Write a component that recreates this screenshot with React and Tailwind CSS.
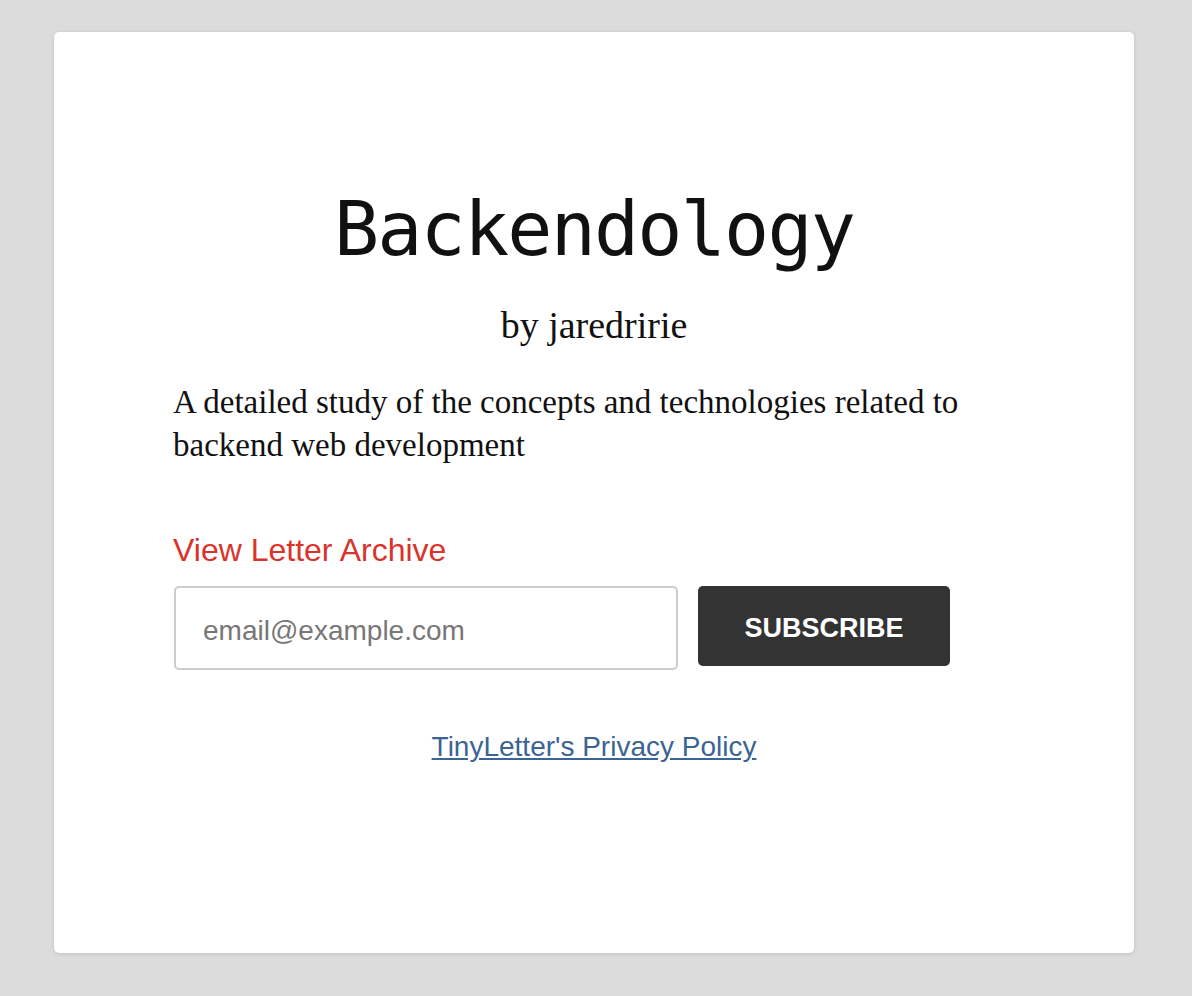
export default function App() {
	return (
		<div className="min-h-screen bg-[#dcdcdc] pt-[32px] pb-[43px] pl-[54px]">
			<div className="w-[1080px] bg-white rounded-[5px] shadow-[0_1px_4px_rgba(0,0,0,0.12)] h-[921px] flex flex-col items-center pt-[153px]">
				<h1 className="text-[75px] leading-[88px] tracking-[-1.8px] text-[#111] font-['DejaVu_Sans_Mono',monospace]">Backendology</h1>
				<p className="mt-[30px] text-[38px] leading-[44px] text-[#111] font-['Liberation_Serif',serif]">by jaredririe</p>
				<div className="w-[842px] mt-[34px]">
					<p className="text-[33px] leading-[43px] text-[#111] font-['Liberation_Serif',serif]">
						A detailed study of the concepts and technologies related to backend web development
					</p>
					<a href="#" className="block mt-[65px] text-[32px] leading-[36px] text-[#d9342b] font-['Liberation_Sans',sans-serif]">
						View Letter Archive
					</a>
					<form className="flex items-start gap-[20px] mt-[18px] ml-[1px]" onSubmit={(e) => e.preventDefault()}>
						<input
							type="email"
							placeholder="email@example.com"
							className="w-[504px] h-[84px] border-2 border-[#cccccc] rounded-[5px] px-[27px] pt-[5px] text-[28px] text-[#333] placeholder:text-[#777] font-['Liberation_Sans',sans-serif] outline-none"
						/>
						<button className="w-[252px] h-[80px] bg-[#333333] rounded-[5px] pt-[5px] text-white text-[27px] font-bold font-['Liberation_Sans',sans-serif]">
							SUBSCRIBE
						</button>
					</form>
				</div>
				<a href="#" className="mt-[61px] text-[28px] leading-[32px] text-[#3b6494] underline font-['Liberation_Sans',sans-serif]">
					TinyLetter's Privacy Policy
				</a>
			</div>
		</div>
	);
}
